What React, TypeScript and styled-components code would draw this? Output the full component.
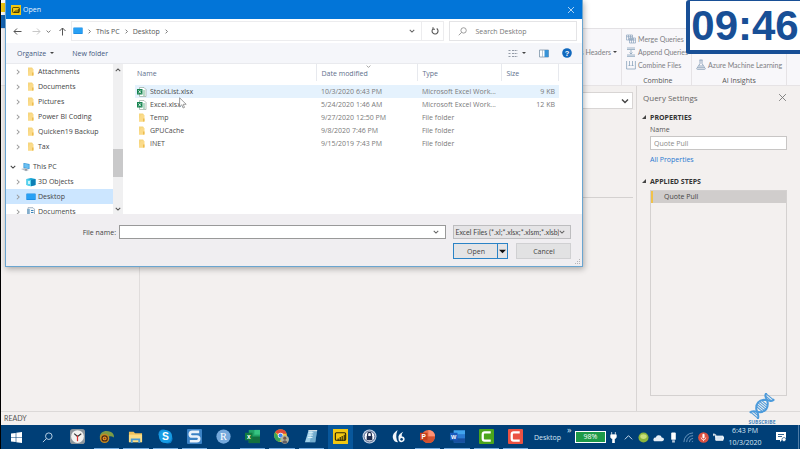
import React from "react";
import styled, { createGlobalStyle } from "styled-components";

const GlobalStyle = createGlobalStyle`
  * { box-sizing: border-box; }
  body { margin: 0; background: #f3f0ef; overflow: hidden; }
  body, button, input, select, table {
    font-family: "Open Sans", "Noto Sans", sans-serif;
    font-size: 7px;
    color: #444;
  }
  button { border: 0; padding: 0; background: none; }
  svg { display: block; flex: none; }
`;

/* ---------- window behind the dialog ---------- */

const Shell = styled.div`
  position: relative;
  height: 100vh;
  display: grid;
  grid-template-rows: 28px 58px 1fr 14px 24px;
  border-left: 1px solid #000;
  background: #f3f0ef;
`;

const AppTitle = styled.header`
  background: linear-gradient(#fff 3px, #f2c811 3px 12px, #fff 12px 15px, #1565b5 15px) no-repeat left / 6px 100% #fff;
`;

const Ribbon = styled.div`
  display: flex;
  justify-content: flex-end;
  background: #f8f7fa;
  border-top: 1px solid #e3e1e4;
  border-bottom: 1px solid #e6e3e5;
  padding-right: 13px;
`;

const RibbonGroup = styled.section<{ $width: number }>`
  width: ${(p) => p.$width}px;
  padding: 3px 4px 0;
  border-right: 1px solid #e6e3e6;
  display: grid;
  grid-template-rows: repeat(3, 13px) 14px;
  align-items: center;
`;

const GroupLabel = styled.h3`
  margin: 0;
  font-size: 7px;
  font-weight: 400;
  color: #555;
  text-align: center;
  grid-row: 4;
  align-self: end;
`;

const RibbonButton = styled.button<{ $row: number; $end?: boolean }>`
  grid-row: ${(p) => p.$row};
  display: flex;
  align-items: center;
  justify-content: ${(p) => (p.$end ? "flex-end" : "flex-start")};
  gap: 2px;
  font-family: Lato, "Open Sans", sans-serif;
  color: #7e7e84;
  white-space: nowrap;
`;

const Workspace = styled.main`
  display: grid;
  grid-template-columns: 139px 1fr 164px;
  min-height: 0;
`;

const QueriesPane = styled.aside`
  border-right: 1px solid #e0dddc;
`;

const Editor = styled.section`
  padding: 6px 3px 0 4px;
`;

const FormulaBar = styled.div`
  height: 17px;
  background: #fff;
  border: 1px solid #d8d5d4;
  display: flex;
  align-items: center;
  justify-content: flex-end;
  padding-right: 3px;
`;

const Preview = styled.div`
  height: 89px;
  border-bottom: 1px solid #d4d1d0;
`;

const Settings = styled.aside`
  border-left: 1px solid #d8d5d4;
  padding: 4px 13px 15px;
  display: flex;
  flex-direction: column;
`;

const SettingsHead = styled.div`
  display: flex;
  justify-content: space-between;
  align-items: center;
  height: 15px;
  margin-left: -7px;
`;

const SettingsTitle = styled.h2`
  margin: 0;
  font-size: 8px;
  font-weight: 400;
  color: #666;
`;

const SectionTitle = styled.h3`
  display: flex;
  align-items: center;
  gap: 4px;
  height: 12px;
  margin: 6px 0 0 -8px;
  font-size: 7px;
  font-weight: 700;
  color: #333;
`;

const NameLabel = styled.label`
  height: 12px;
  line-height: 12px;
  margin-top: 1px;
  color: #555;
`;

const NameInput = styled.input`
  width: 100%;
  height: 14px;
  border: 1px solid #c8c6c5;
  background: #fff;
  padding: 0 3px;
  color: #8a8a8a;
  outline: 0;
`;

const PropsLink = styled.a`
  margin: 4px 0;
  line-height: 11px;
  color: #2878cf;
  text-decoration: none;
`;

const Steps = styled.ul`
  flex: 1;
  margin: 3px 0 0;
  padding: 0;
  list-style: none;
  border: 1px solid #d4d1d0;
`;

const Step = styled.li`
  height: 12px;
  line-height: 12px;
  background: #d0cdcc;
  border-left: 2px solid #f0c24b;
  padding-left: 11px;
`;

const StatusBar = styled.footer`
  border-top: 1px solid #dcd9d8;
  padding-left: 3px;
  line-height: 12px;
  font-family: Lato, "Open Sans", sans-serif;
  color: #555;
`;

/* ---------- clock and channel badge ---------- */

const Clock = styled.time`
  position: absolute;
  z-index: 3;
  top: 0;
  right: 0;
  width: 114px;
  height: 54px;
  border: 4px solid #184f96;
  border-right: 0;
  border-top-width: 1px;
  border-radius: 3px 0 0 3px;
  background: #fff;
  color: #184f96;
  font: 700 42px/50px "Liberation Sans", sans-serif;
  text-align: center;
  white-space: nowrap;
`;

const Badge = styled.div`
  position: absolute;
  right: 22px;
  bottom: 23px;
  width: 32px;
  display: grid;
  justify-items: center;
  font-size: 5px;
  font-weight: 700;
  line-height: 7px;
  color: #4a86bd;
`;

/* ---------- file dialog ---------- */

const Dialog = styled.div`
  position: absolute;
  z-index: 2;
  top: 0;
  left: 4px;
  width: 72.4%;
  border: 1px solid #6aa5d0;
  border-top: 0;
  background: #fff;
  box-shadow: 1px 2px 6px rgba(0, 0, 0, 0.3);
`;

const DialogTitle = styled.div`
  display: flex;
  align-items: center;
  gap: 2px;
  height: 19px;
  padding: 0 7px 0 5px;
  background: #0275d8;
  color: #e7f3fd;
`;

const DialogName = styled.span`
  flex: 1;
`;

const NavBar = styled.div`
  display: flex;
  align-items: center;
  height: 24px;
  padding: 0 5px 0 7px;
`;

const NavButtons = styled.div`
  display: grid;
  grid-template-columns: 19px 14px 12px 13px;
  align-items: center;
`;

const Address = styled.div`
  flex: 1;
  height: 20px;
  display: flex;
  align-items: center;
  gap: 4px;
  border: 1px solid #ececee;
  padding-left: 1px;
`;

const Crumb = styled.button`
  color: #555;
`;

const DropSlot = styled.button`
  margin-left: auto;
  width: 20px;
  height: 100%;
  display: grid;
  place-items: center;
  border-right: 1px solid #ececee;
`;

const Refresh = styled.button`
  width: 17px;
  display: grid;
  justify-items: center;
`;

const SearchBox = styled.label`
  width: 128px;
  height: 20px;
  margin-left: 5px;
  display: flex;
  align-items: center;
  gap: 8px;
  border: 1px solid #e4e4e6;
  padding-left: 8px;
`;

const SearchInput = styled.input`
  width: 90px;
  border: 0;
  padding: 0;
  outline: 0;
  background: transparent;
  &::placeholder { color: #777; opacity: 1; }
`;

const Toolbar = styled.div`
  display: flex;
  align-items: center;
  gap: 18px;
  height: 21px;
  padding: 0 10px 0 11px;
  background: #f5f6fa;
  border-bottom: 1px solid #e9eaee;
`;

const ToolButton = styled.button`
  display: flex;
  align-items: center;
  gap: 4px;
  color: #44597f;
`;

const ToolsRight = styled.div`
  display: flex;
  align-items: center;
  gap: 13px;
  margin-left: auto;
`;

const Browser = styled.div`
  display: grid;
  grid-template-columns: 107px 10px 1fr;
  height: 150px;
  overflow: hidden;
`;

const Tree = styled.ul`
  margin: 0;
  padding: 0;
  list-style: none;
  min-height: 0;
`;

const TreeItem = styled.li<{ $root?: boolean; $selected?: boolean }>`
  display: flex;
  align-items: center;
  height: 15px;
  gap: 5px;
  padding-left: ${(p) => (p.$root ? 4 : 9)}px;
  margin-top: ${(p) => (p.$root ? 5 : 0)}px;
  background: ${(p) => (p.$selected ? "#cce6ff" : "transparent")};
  white-space: nowrap;
`;

const TreeLabel = styled.span`
  display: grid;
  grid-template-columns: 10px auto;
  align-items: center;
  gap: 2px;
`;

const ScrollTrack = styled.div`
  display: flex;
  flex-direction: column;
  align-items: center;
  background: #f0f0f1;
  padding: 3px 0 2px;
`;

const ScrollThumb = styled.div`
  width: 100%;
  height: 28px;
  background: #c9c9ca;
  margin: auto 0 29px;
`;

const ListArea = styled.div`
  position: relative;
  padding: 0 23px 0 12px;
`;

const FileTable = styled.table`
  width: 100%;
  table-layout: fixed;
  border-collapse: collapse;
`;

const HeadCell = styled.th`
  height: 17px;
  padding: 2px 0 0 4px;
  text-align: left;
  font-weight: 400;
  color: #5e6f8c;
  border-right: 1px solid #e7e9ee;
  &:first-child { padding-left: 2px; }
`;

const FileRow = styled.tr<{ $hover?: boolean }>`
  height: 13px;
  background: ${(p) => (p.$hover ? "#e5f2fd" : "transparent")};
`;

const Cell = styled.td<{ $right?: boolean }>`
  padding: 0 4px;
  white-space: nowrap;
  color: #7a7a7a;
  text-align: ${(p) => (p.$right ? "right" : "left")};
  &:first-child { padding-left: 2px; }
`;

const FileName = styled.span`
  display: grid;
  grid-template-columns: 10px auto;
  align-items: center;
  gap: 3px;
  color: #4c4c4c;
`;

const Spacer = styled.tr`
  height: 4px;
`;

const SortMark = styled.div`
  position: absolute;
  top: 0;
  left: 243px;
`;

const Pointer = styled.div`
  position: absolute;
  top: 33px;
  left: 56px;
`;

const DialogFoot = styled.form`
  display: grid;
  grid-template-columns: 113px 1fr 118px;
  grid-template-rows: 14px 16px;
  row-gap: 4px;
  padding: 11px 11px 7px 0;
  background: #f0eef1;
`;

const FileLabel = styled.label`
  align-self: center;
  text-align: right;
  padding-right: 3px;
`;

const Combo = styled.div`
  display: grid;
  grid-template-columns: 1fr 12px;
  align-items: center;
  margin-right: 7px;
  background: #fff;
  border: 1px solid #999;
`;

const ComboInput = styled.input`
  width: 100%;
  height: 12px;
  border: 0;
  outline: 0;
  background: transparent;
`;

const TypePicker = styled.div`
  display: grid;
  grid-template-columns: 1fr 11px;
  align-items: center;
  background: #e5e4e6;
  border: 1px solid #bdbdbf;
`;

const TypeSelect = styled.select`
  appearance: none;
  grid-area: 1 / 1;
  width: 100%;
  height: 12px;
  border: 0;
  padding: 0 0 0 1px;
  background: transparent;
  font-family: Lato, "Open Sans", sans-serif;
  text-overflow: clip;
  outline: 0;
`;

const Buttons = styled.div`
  grid-column: 3;
  display: grid;
  grid-template-columns: 55px 55px;
  justify-content: space-between;
`;

const OpenSplit = styled.div`
  display: grid;
  grid-template-columns: 1fr 10px;
  background: #e4e4e6;
  border: 1px solid #2b83c6;
`;

const OpenMore = styled.button`
  display: grid;
  place-items: center;
  border-left: 1px solid #2b83c6;
`;

const CancelButton = styled.button`
  background: #e2e2e3;
  border: 1px solid #d0d0d2;
`;

const Grip = styled.div`
  position: absolute;
  right: 1px;
  bottom: 1px;
`;

/* ---------- taskbar ---------- */

const Taskbar = styled.nav`
  display: flex;
  background: #003f77;
  color: #d7e6f5;
`;

const SystemButton = styled.button`
  width: 31px;
  display: grid;
  place-items: center;
`;

const Apps = styled.div`
  flex: 0 1 467px;
  display: grid;
  grid-template-columns: repeat(16, 1fr);
`;

const AppButton = styled.button<{ $running?: boolean; $active?: boolean }>`
  display: grid;
  place-items: center;
  margin: 0 2px;
  border-bottom: 1px solid ${(p) => (p.$running ? "#76acdf" : "transparent")};
  background: ${(p) => (p.$active ? "#08579b" : "transparent")};
`;

const Tray = styled.div`
  flex: 1;
  display: flex;
  align-items: center;
  padding-left: 4px;
  color: #d7e6f5;
  white-space: nowrap;
`;

const DesktopLabel = styled.span`
  width: 33px;
`;

const Overflow = styled.span`
  width: 8px;
  align-self: flex-start;
  font-size: 9px;
  line-height: 10px;
`;

const Battery = styled.span`
  width: 31px;
  height: 12px;
  line-height: 10px;
  text-align: center;
  border: 1px solid #fff;
  background: #1d9a48;
  color: #fff;
`;

const TrayIcons = styled.div`
  display: grid;
  grid-template-columns: repeat(8, 15px);
  justify-items: center;
  align-items: center;
`;

const DateTime = styled.div`
  width: 38px;
  text-align: center;
  line-height: 12px;
`;

const Notice = styled.button`
  flex: 1;
  height: 100%;
  display: grid;
  place-items: center;
  border-right: 1px solid #4d7ba6;
  margin-right: 1px;
`;

/* ---------- drawings ---------- */

const Chevron = ({ dir = "down", size = 6, color = "#666" }: { dir?: string; size?: number; color?: string }) => (
  <svg width={size} height={size} viewBox="0 0 8 8" fill="none" stroke={color} strokeWidth="1.4" aria-hidden>
    <path d={dir === "right" ? "M2.5 1 5.5 4 2.5 7" : dir === "up" ? "M1 5.5 4 2.5 7 5.5" : "M1 2.5 4 5.5 7 2.5"} />
  </svg>
);

const Caret = ({ color = "#444", size = 4 }: { color?: string; size?: number }) => (
  <svg width={size} height={size} viewBox="0 0 4 4" fill={color} aria-hidden><path d="M0 1h4L2 3z" /></svg>
);

const Arrow = ({ dir, color = "#555" }: { dir: "left" | "right" | "up"; color?: string }) => (
  <svg width="9" height="9" viewBox="0 0 9 9" fill="none" stroke={color} aria-hidden>
    <path d={dir === "left" ? "M8.500 4.500H1M4 1.500l-3 3 3 3" : dir === "right" ? "M.5 4.500H8M5 1.500l3 3-3 3" : "M4.500 8.500V1M1.500 4l3-3 3 3"} />
  </svg>
);

const Close = ({ color, size }: { color: string; size: number }) => (
  <svg width={size} height={size} viewBox="0 0 8 8" stroke={color} strokeWidth=".8" aria-hidden><path d="M1 1l6 6M7 1 1 7" /></svg>
);

const Magnifier = ({ color, size }: { color: string; size: number }) => (
  <svg width={size} height={size} viewBox="0 0 10 10" fill="none" stroke={color} strokeWidth=".9" aria-hidden>
    <circle cx="6.200" cy="3.800" r="3" /><path d="M4 6 .8 9.200" />
  </svg>
);

const Folder = () => (
  <svg width="10" height="9" viewBox="0 0 10 9" aria-hidden>
    <path d="M2 .5h4l1 1v7H2z" fill="#f6d67f" /><path d="M4 2h3.500v6.500H2V6z" fill="#fbdb8a" /><path d="M6 5.500h1.500v3H6z" fill="#edbd50" />
  </svg>
);

const Monitor = () => (
  <svg width="10" height="8" viewBox="0 0 10 8" aria-hidden>
    <rect x=".3" y=".5" width="9.400" height="6.500" rx=".4" fill="#1c8ee6" /><rect x="1" y="1" width="8" height="5" fill="#28a0f4" />
  </svg>
);

const Computer = () => (
  <svg width="10" height="10" viewBox="0 0 10 10" aria-hidden>
    <path d="m2.500 1 6 1v5l-6-1z" fill="#2b8fd6" /><path d="m3.200 1.800 4.600.8v3.600l-4.600-.8z" fill="#6ac0f2" />
    <path d="m0 7 4-1 4 2-3 1.300z" fill="#b3bdc7" /><path d="M5 7v1.500" stroke="#777" />
  </svg>
);

const Cube = () => (
  <svg width="10" height="10" viewBox="0 0 10 10" aria-hidden>
    <path d="M.5 2 5 1l4.500 1v6L5 9.200.5 8z" fill="#19a9d8" /><path d="M.5 2 5 3v6.200L.5 8z" fill="#55d3ee" /><path d="M5 3l4.500-1v6L5 9.200z" fill="#0d7fb5" /><path d="M2 4h2v3H2z" fill="#c9f4fc" />
  </svg>
);

const Page = () => (
  <svg width="10" height="10" viewBox="0 0 10 10" aria-hidden>
    <path d="M2 .7h5l1.500 1.500v7H2z" fill="#f4f8fb" stroke="#8598aa" strokeWidth=".7" /><path d="M1 3h3M1 5h3M1 7h3M5 3.500h2.500M5 5.500h2.500M5 7.500h2.500" stroke="#3d84b8" />
  </svg>
);

const SheetFile = () => (
  <svg width="10" height="10" viewBox="0 0 10 10" aria-hidden>
    <path d="M2.500.5h4.500L9 2.500v7H2.500z" fill="#fff" stroke="#96a99d" strokeWidth=".7" /><path d="M6 4h2M6 6h2M6 8h2" stroke="#48a672" strokeWidth=".8" />
    <rect y="2" width="5.500" height="5.500" fill="#168450" /><path d="m1.500 3.300 2.500 3M4 3.300l-2.500 3" stroke="#fff" strokeWidth=".8" />
  </svg>
);

const BiLogo = ({ size }: { size: number }) => (
  <svg width={size} height={size} viewBox="0 0 16 16" aria-hidden>
    <path d="M0 0h16v16H0z" fill="#f2c811" /><rect x="2.500" y="4" width="11" height="8" rx="1.200" fill="none" stroke="#2c2704" strokeWidth="1.200" />
    <path d="M5.500 12.500V10M7.700 12.500V8.500M9.800 12.500V7.500M12 12.500V6" stroke="#2c2704" strokeWidth="1.200" />
  </svg>
);

const MergeIcon = () => (
  <svg width="10" height="10" viewBox="0 0 10 10" fill="none" stroke="#8ca4bd" strokeWidth=".7" aria-hidden>
    <path d="M.5 1h6v5h-6zM.5 2.700h6M2.500 1v5M4.500 1v5M3.500 4h6v5h-6zM3.500 6h6M5.500 4v5M7.500 4v5" />
  </svg>
);
const AppendIcon = () => (
  <svg width="10" height="10" viewBox="0 0 10 10" fill="none" stroke="#8ca4bd" strokeWidth=".8" aria-hidden>
    <path d="M1 1h8M1 2.500h8M1 8h8M1 9.400h8M5 3v4M3.500 5.500 5 7l1.500-1.500" />
  </svg>
);
const CombineIcon = () => (
  <svg width="10" height="10" viewBox="0 0 10 10" fill="none" stroke="#8ca4bd" strokeWidth=".8" aria-hidden>
    <path d="M.6 1v8h8.800V1M3.500 1v5M6.500 1v5M2.500 5l1 1 1-1M5.500 5l1 1 1-1" />
  </svg>
);
const Flask = () => (
  <svg width="10" height="11" viewBox="0 0 10 11" fill="none" stroke="#7f98b3" strokeWidth=".8" aria-hidden>
    <path d="M3.500 1h3M4 1v3.500L.8 9.500q-.2.8.7.8h7q.9 0 .7-.8L6 4.500V1M3 7h4M2 8.700h6" />
  </svg>
);

const Helix = () => (
  <svg width="28" height="26" viewBox="0 0 28 26" fill="none" stroke="#4d9bdb" aria-hidden>
    <g transform="translate(14 13) rotate(-50)">
      <path d="M-13-4.500C-9-4.500-9 4.500-4 4.500-1 4.500 1 4.500 4 4.500" stroke="none" />
      <path d="M-13-5C-9-5-8 0-6 2.500Q0 8 6 2.500 8 0 9-2.500 10-5 13-5" strokeWidth="2" />
      <path d="M-13 5C-9 5-8 0-6-2.500Q0-8 6-2.500 8 0 9 2.500 10 5 13 5" strokeWidth="2" />
      <path d="M-12-4.500v9M-10-3v6M-4-4v8M-2-5v10M0-5v10M2-5v10M4-4v8M10-3v6M12-4.500v9" strokeWidth="1" />
    </g>
  </svg>
);

const Letter = ({ x, y, size, children, fill = "#fff", serif }: { x: number; y: number; size: number; children: string; fill?: string; serif?: boolean }) => (
  <text x={x} y={y} fontSize={size} fill={fill} textAnchor="middle" fontWeight={serif ? 400 : 700} fontFamily={serif ? "Liberation Serif, serif" : "Liberation Sans, sans-serif"}>{children}</text>
);

const taskIcons: { name: string; running?: boolean; active?: boolean; art: React.ReactNode }[] = [
  { name: "Clock", art: <><rect width="16" height="16" rx="3" fill="#8d969d" /><circle cx="8" cy="8" r="6.800" fill="#f2f2f0" /><path d="m8 8-3.500-3M8 8l4-3" stroke="#333" strokeWidth="1.200" /><path d="M8 7v6" stroke="#d33" strokeWidth="1.300" /></> },
  { name: "Chameleon", running: true, art: <><path d="M1 10C0 3 7 1 12 3q4 1 4 6-3-2-6-1z" fill="#7d9c45" /><circle cx="6" cy="10" r="5" fill="#c28a22" /><circle cx="6" cy="10" r="3.400" fill="#4d2613" /><circle cx="6" cy="10" r="2.100" fill="#e0a526" /><circle cx="6" cy="10" r="1" fill="#a02218" /></> },
  { name: "File Explorer", running: true, art: <><path d="M1 3h5l1.500 1.500H15V14H1z" fill="#eec05a" /><path d="M1 6h14v8H1z" fill="#fbdd85" /><path d="M3 15v-5h10v5h-2v-3H5v3z" fill="#4a9ad4" /></> },
  { name: "Skype", running: true, art: <><circle cx="5.500" cy="5.500" r="5" fill="#168fd9" /><circle cx="10.500" cy="10.500" r="5" fill="#0b7fca" /><circle cx="8" cy="8" r="7" fill="#169be4" /><Letter x={8} y={12} size={11}>S</Letter></> },
  { name: "Snagit", running: true, art: <><rect width="16" height="16" rx="1" fill="#3b82c5" /><path d="M13 3H5.500Q3 3 3 5.500T5.500 8h5q2.500 0 2.500 2.500T10.500 13H3" fill="none" stroke="#e9f2fb" strokeWidth="2.800" /></> },
  { name: "R", art: <><circle cx="8" cy="8" r="7.600" fill="#75a9dc" /><Letter x={8} y={12} size={11} serif>R</Letter></> },
  { name: "Excel", running: true, art: <><path d="M4 1h12v14H4z" fill="#21a366" /><path d="M10 1h6v5h-6z" fill="#36c481" /><path d="M4 8h12v7H4z" fill="#12703e" /><path d="M0 4h8v8H0z" fill="#107c41" /><Letter x={4} y={10.5} size={7}>x</Letter></> },
  { name: "Chrome", running: true, art: <><circle cx="7" cy="7" r="6.800" fill="#f4c436" /><path d="M7 7 1.200 3.400A6.800 6.800 0 0 1 13.400 5H7z" fill="#e04a3b" /><path d="M1.200 3.400A6.800 6.800 0 0 0 6 13.700L8.500 9 5 8z" fill="#3aa757" /><circle cx="7" cy="7" r="2.900" fill="#fff" /><circle cx="7" cy="7" r="2.200" fill="#4285f4" /><circle cx="11.500" cy="11.300" r="4.500" fill="#aeb3a3" /><circle cx="11.500" cy="9.800" r="1.700" fill="#795849" /><path d="M8.500 14q3-4 6 0-3 2.500-6 0" fill="#635d63" /></> },
  { name: "Notepad", running: true, art: <><path d="M5 1h9l-2 13H1z" fill="#9ed0e8" /><path d="M9 2h5l-2 12H6z" fill="#5795bd" opacity=".6" /><path d="M5 4h5M4.500 6.500h5M4 9h5" stroke="#e8f6fc" /><path d="M5 1h9v1.500H4.700z" fill="#d2dce2" /></> },
  { name: "Power BI Desktop", active: true, art: <><path d="M0 0h16v16H0z" fill="#f2c811" /><rect x="2.500" y="4" width="11" height="8" rx="1.200" fill="none" stroke="#2c2704" strokeWidth="1.200" /><path d="M5.500 12.500V10M7.700 12.500V8.500M9.800 12.500V7.500M12 12.500V6" stroke="#2c2704" strokeWidth="1.200" /></> },
  { name: "KeePass", art: <><circle cx="8" cy="8" r="7.400" fill="#c5d3e5" /><circle cx="8" cy="8" r="5.800" fill="#f4f6fa" stroke="#203a6c" strokeWidth=".8" /><path d="M5 7.500h6V12H5z" fill="#1b2b4e" /><path d="M6 8V5.500a2 2 0 0 1 4 0V8" fill="none" stroke="#1b2b4e" strokeWidth="1.300" /></> },
  { name: "Dragon", art: <><path d="M7 1Q1 5 2 9.500 3 14 7.500 14 4 9 7 1zM13 3Q7 6 8 10q0 4 3 4 4-.5 3.500-4-.5-2.500-3-2Q11 5 13 3z" fill="#f1f6fb" /><circle cx="11.300" cy="11" r="1.400" fill="#003f77" /></> },
  { name: "PowerPoint", running: true, art: <><circle cx="9" cy="8" r="7" fill="#ed6c47" /><path d="M9 1a7 7 0 0 1 7 7H9z" fill="#ff9274" /><path d="M2 8h14a7 7 0 0 1-14 0" fill="#d35230" /><path d="M0 4h8v8H0z" fill="#c43e1c" /><Letter x={4} y={10.5} size={7}>P</Letter></> },
  { name: "Word", running: true, art: <><path d="M4 1.500h12v13H4z" fill="#2b7cd3" /><path d="M4 1.500h12v4H4z" fill="#41a5ee" /><path d="M4 10h12v4.500H4z" fill="#174f9f" /><path d="M0 4h8v8H0z" fill="#185abd" /><Letter x={4} y={10.5} size={6}>W</Letter></> },
  { name: "Camtasia", running: true, art: <><rect width="16" height="16" rx="1" fill="#4ba51c" /><path d="M12.500 3.500H6Q4 3.500 4 5.500v5q0 2 2 2h6.500" fill="none" stroke="#fff" strokeWidth="2.400" /></> },
  { name: "Camtasia Recorder", running: true, art: <><rect width="16" height="16" rx="1" fill="#eb5243" /><path d="M12.500 3.500H6Q4 3.500 4 5.500v5q0 2 2 2h6.500" fill="none" stroke="#fff" strokeWidth="2.400" /></> },
];

const trayArt: { name: string; art: React.ReactNode }[] = [
  { name: "Power", art: <path d="M4 0v3M8 0v3M3 3h6v3L7 8v4H5V8L3 6z" fill="#fff" stroke="#fff" strokeWidth=".8" /> },
  { name: "Show hidden icons", art: <path d="m2 8 4-4 4 4" fill="none" stroke="#d7e6f5" /> },
  { name: "Status", art: <><circle cx="6" cy="6" r="5.500" fill="#8cb63c" /><ellipse cx="6" cy="5" rx="3.500" ry="2.500" fill="#c8de7c" /></> },
  { name: "OneDrive", art: <path d="M2.500 10Q0 10 .5 7.500 1 6 3 6q1-3 3.500-2.500Q9 3.500 9.500 6 12 6 12 8t-2 2z" fill="#e6eef6" /> },
  { name: "USB drive", art: <><rect x="3.500" y=".5" width="5" height="8" rx="1" fill="#fff" /><path d="M4.500 9h3v2.500h-3z" fill="#b9c9db" /></> },
  { name: "Wi-Fi", art: <path d="M1 11A10 10 0 0 1 11 1M4 11a7 7 0 0 1 7-7M7 11a4 4 0 0 1 4-4M10 11a1 1 0 0 1 1-1" fill="none" stroke="#7ba4ca" strokeWidth=".9" /> },
  { name: "Microphone", art: <><circle cx="6" cy="6" r="5.800" fill="#dc5142" /><rect x="4.800" y="2" width="2.400" height="5" rx="1.200" fill="#fff" /><path d="M3.500 6q0 2.500 2.500 2.500T8.500 6M6 8.500V10" fill="none" stroke="#fff" strokeWidth=".8" /></> },
  { name: "Battery", art: <><path d="M3 4.500h8v4.500H3z" fill="#d7e6f5" stroke="#fff" /><path d="M0 3h3M1 1.500v3M3 3v3M11.500 5.500v2" stroke="#fff" /></> },
];

const folders = ["Attachments", "Documents", "Pictures", "Power BI Coding", "Quicken19 Backup", "Tax"];

const places = [
  { name: "3D Objects", icon: <Cube /> },
  { name: "Desktop", icon: <Monitor />, selected: true },
  { name: "Documents", icon: <Page /> },
];

const files = [
  { name: "StockList.xlsx", date: "10/3/2020 6:43 PM", type: "Microsoft Excel Work...", size: "9 KB" },
  { name: "Excel.xlsx", date: "5/24/2020 1:46 AM", type: "Microsoft Excel Work...", size: "12 KB" },
  { name: "Temp", date: "9/27/2020 12:50 PM", type: "File folder", size: "" },
  { name: "GPUCache", date: "9/8/2020 7:46 PM", type: "File folder", size: "" },
  { name: "INET", date: "9/15/2019 7:43 PM", type: "File folder", size: "" },
];

const Triangle = () => (
  <svg width="4" height="4" viewBox="0 0 4 4" fill="#444" aria-hidden><path d="M4 0v4H0z" /></svg>
);

function OpenDialog() {
  return (
    <Dialog role="dialog" aria-label="Open">
      <DialogTitle>
        <BiLogo size={10} />
        <DialogName>Open</DialogName>
        <button aria-label="Close dialog"><Close color="#d5e9fa" size={8} /></button>
      </DialogTitle>
      <NavBar>
        <NavButtons>
          <button aria-label="Back"><Arrow dir="left" /></button>
          <button aria-label="Forward"><Arrow dir="right" color="#c8c8c8" /></button>
          <button aria-label="Recent locations"><Chevron size={5} /></button>
          <button aria-label="Up"><Arrow dir="up" /></button>
        </NavButtons>
        <Address>
          <Monitor />
          <Chevron dir="right" size={5} />
          <Crumb>This PC</Crumb>
          <Chevron dir="right" size={5} />
          <Crumb>Desktop</Crumb>
          <Chevron dir="right" size={5} />
          <DropSlot aria-label="Previous locations"><Chevron /></DropSlot>
          <Refresh aria-label="Refresh">
            <svg width="8" height="8" viewBox="0 0 8 8" fill="none" stroke="#555" strokeWidth="1.100"><path d="M5.700 1.500A3 3 0 1 1 2 1.800M2 .3v2h2" /></svg>
          </Refresh>
        </Address>
        <SearchBox>
          <Magnifier color="#888" size={9} />
          <SearchInput type="search" aria-label="Search Desktop" placeholder="Search Desktop" />
        </SearchBox>
      </NavBar>
      <Toolbar>
        <ToolButton>Organize <Caret /></ToolButton>
        <ToolButton>New folder</ToolButton>
        <ToolsRight>
          <ToolButton aria-label="Change view">
            <svg width="10" height="9" viewBox="0 0 10 9" stroke="#89919d" strokeWidth=".9"><path d="M.5 1.500h2M.5 4.500h2M.5 7.500h2" /><path d="M4 1.500h5.500M4 4.500h5.500M4 7.500h5.500" strokeDasharray="2 .6" /></svg>
            <Caret />
          </ToolButton>
          <ToolButton aria-label="Preview pane">
            <svg width="10" height="9" viewBox="0 0 10 9"><path d="M.5 1h9v7h-9z" fill="#fff" stroke="#7e95a9" strokeWidth=".8" /><path d="M5.500 1h4v7h-4z" fill="#3993d6" /><path d="M3.500 1v7" stroke="#9bb0c2" strokeWidth=".7" /></svg>
          </ToolButton>
          <ToolButton aria-label="Help">
            <svg width="10" height="10" viewBox="0 0 10 10"><circle cx="5" cy="5" r="4.800" fill="#1068bd" /><Letter x={5} y={7.6} size={7.5}>?</Letter></svg>
          </ToolButton>
        </ToolsRight>
      </Toolbar>
      <Browser>
        <Tree>
          {folders.map((name) => (
            <TreeItem key={name}><Chevron dir="right" size={6} color="#999" /><TreeLabel><Folder />{name}</TreeLabel></TreeItem>
          ))}
          <TreeItem $root><Chevron size={6} color="#444" /><TreeLabel><Computer />This PC</TreeLabel></TreeItem>
          {places.map((p) => (
            <TreeItem key={p.name} $selected={p.selected}><Chevron dir="right" size={6} color="#999" /><TreeLabel>{p.icon}{p.name}</TreeLabel></TreeItem>
          ))}
        </Tree>
        <ScrollTrack><Chevron dir="up" color="#555" /><ScrollThumb /><Chevron color="#555" /></ScrollTrack>
        <ListArea>
          <FileTable>
            <colgroup><col /><col width="101" /><col width="84" /><col width="57" /></colgroup>
            <thead>
              <tr><HeadCell>Name</HeadCell><HeadCell>Date modified</HeadCell><HeadCell>Type</HeadCell><HeadCell>Size</HeadCell></tr>
            </thead>
            <tbody>
              <Spacer><td colSpan={4} /></Spacer>
              {files.map((f, i) => (
                <FileRow key={f.name} $hover={i === 0}>
                  <Cell><FileName>{f.size ? <SheetFile /> : <Folder />}{f.name}</FileName></Cell>
                  <Cell>{f.date}</Cell>
                  <Cell>{f.type}</Cell>
                  <Cell $right>{f.size}</Cell>
                </FileRow>
              ))}
            </tbody>
          </FileTable>
          <SortMark><Chevron size={5} color="#999" /></SortMark>
          <Pointer>
            <svg width="8" height="12" viewBox="0 0 8 12" aria-hidden><path d="M.6.8v9l2.200-2 1.300 3.200 1.400-.6-1.300-3.100h3z" fill="#fff" stroke="#777" strokeWidth=".7" /></svg>
          </Pointer>
        </ListArea>
      </Browser>
      <DialogFoot onSubmit={(e) => e.preventDefault()}>
        <FileLabel htmlFor="file-name">File name:</FileLabel>
        <Combo><ComboInput id="file-name" /><Chevron size={6} /></Combo>
        <TypePicker>
          <TypeSelect aria-label="File type"><option>Excel Files (*.xl;*.xlsx;*.xlsm;*.xlsb)</option></TypeSelect>
          <Chevron size={6} />
        </TypePicker>
        <Buttons>
          <OpenSplit><button type="submit">Open</button><OpenMore type="button" aria-label="Open options"><Caret size={7} color="#111" /></OpenMore></OpenSplit>
          <CancelButton type="button">Cancel</CancelButton>
        </Buttons>
      </DialogFoot>
      <Grip><svg width="6" height="6" viewBox="0 0 6 6" fill="#b5b5b8"><path d="M4 0h1v1H4zM4 2h1v1H4zM4 4h1v1H4zM2 2h1v1H2zM2 4h1v1H2zM0 4h1v1H0z" /></svg></Grip>
    </Dialog>
  );
}

export default function App() {
  return (
    <>
      <GlobalStyle />
      <Shell>
        <AppTitle />
        <Ribbon>
          <RibbonGroup $width={92}>
            <RibbonButton $row={2} $end>as Headers <Caret /></RibbonButton>
          </RibbonGroup>
          <RibbonGroup $width={70}>
            <RibbonButton $row={1}><MergeIcon />Merge Queries <Caret /></RibbonButton>
            <RibbonButton $row={2}><AppendIcon />Append Queries</RibbonButton>
            <RibbonButton $row={3}><CombineIcon />Combine Files</RibbonButton>
            <GroupLabel>Combine</GroupLabel>
          </RibbonGroup>
          <RibbonGroup $width={95}>
            <RibbonButton $row={3} $end><Flask />Azure Machine Learning</RibbonButton>
            <GroupLabel>AI Insights</GroupLabel>
          </RibbonGroup>
        </Ribbon>
        <Workspace>
          <QueriesPane />
          <Editor>
            <FormulaBar><button aria-label="Expand formula bar"><Chevron size={8} color="#444" /></button></FormulaBar>
            <Preview />
          </Editor>
          <Settings>
            <SettingsHead>
              <SettingsTitle>Query Settings</SettingsTitle>
              <button aria-label="Close query settings"><Close color="#777" size={9} /></button>
            </SettingsHead>
            <SectionTitle><Triangle />PROPERTIES</SectionTitle>
            <NameLabel htmlFor="query-name">Name</NameLabel>
            <NameInput id="query-name" defaultValue="Quote Pull" />
            <PropsLink href="#properties">All Properties</PropsLink>
            <SectionTitle><Triangle />APPLIED STEPS</SectionTitle>
            <Steps><Step>Quote Pull</Step></Steps>
          </Settings>
        </Workspace>
        <StatusBar>READY</StatusBar>
        <Taskbar>
          <SystemButton aria-label="Start">
            <svg width="11" height="11" viewBox="0 0 11 11" fill="#fff"><path d="M0 1.500 4.700.9v4.300H0zM5.300.8 11 0v5.200H5.300zM0 5.800h4.700v4.300L0 9.500zM5.300 5.800H11V11l-5.700-.8z" /></svg>
          </SystemButton>
          <SystemButton aria-label="Search"><Magnifier color="#b9d0e6" size={11} /></SystemButton>
          <Apps>
            {taskIcons.map((t) => (
              <AppButton key={t.name} aria-label={t.name} $running={t.running} $active={t.active}>
                <svg width="15" height="15" viewBox="0 0 16 16">{t.art}</svg>
              </AppButton>
            ))}
          </Apps>
          <Tray>
            <DesktopLabel>Desktop</DesktopLabel>
            <Overflow>»</Overflow>
            <Battery>98%</Battery>
            <TrayIcons>
              {trayArt.map((t) => (
                <svg key={t.name} width="11" height="11" viewBox="0 0 12 12" role="img" aria-label={t.name}>{t.art}</svg>
              ))}
            </TrayIcons>
            <DateTime>6:43 PM<br />10/3/2020</DateTime>
            <Notice aria-label="Notifications">
              <svg width="12" height="12" viewBox="0 0 12 12"><path d="M1 1h10v8H7l-2 2V9H1z" fill="#fff" /><path d="M3 3.500h6M3 5.500h4" stroke="#003f77" strokeWidth=".8" /><circle cx="9" cy="8.500" r="2" fill="#fff" stroke="#003f77" strokeWidth=".6" /></svg>
            </Notice>
          </Tray>
        </Taskbar>
        <Badge>
          <Helix />
          SUBSCRIBE
        </Badge>
        <OpenDialog />
        <Clock>09:46</Clock>
      </Shell>
    </>
  );
}
